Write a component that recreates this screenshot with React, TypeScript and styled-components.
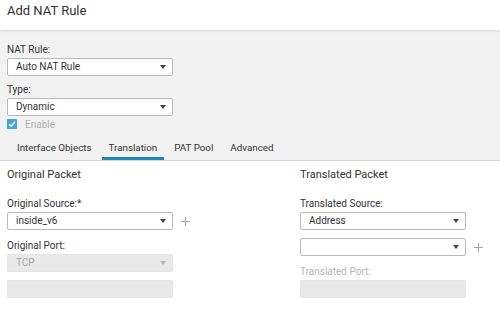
import React from "react";
import styled, { createGlobalStyle } from "styled-components";

const Global = createGlobalStyle`
  html, body { margin: 0; padding: 0; background: #fff; }
  body { font-family: Roboto, "Liberation Sans", Arial, sans-serif; color: #333; }
  * { box-sizing: border-box; }
`;

const Page = styled.div`
  width: 500px;
  height: 322px;
  overflow: hidden;
  background: #fff;
  display: flex;
  flex-direction: column;
`;

const Header = styled.div`
  height: 30px;
  padding: 2px 7px 0;
  font-size: 13px;
  line-height: 18px;
  color: #333;
  background: #fff;
  box-shadow: 0 1px 2px rgba(0, 0, 0, 0.12);
  position: relative;
  z-index: 1;
`;

const TopPanel = styled.div`
  background: #f2f2f2;
  padding: 13px 0 0 7px;
  border-bottom: 1px solid #d4d4d4;
  display: flex;
  flex-direction: column;
`;

const Label = styled.div<{ $muted?: boolean }>`
  font-size: 10px;
  line-height: 13px;
  color: ${(p) => (p.$muted ? "#b5b5b5" : "#333")};
  margin-bottom: 2px;
`;

const Field = styled.div<{ $gap?: number }>`
  display: flex;
  flex-direction: column;
  margin-bottom: ${(p) => p.$gap ?? 6}px;
`;

const SelectRow = styled.div`
  display: flex;
  align-items: center;
  gap: 8px;
`;

const SelectBox = styled.div<{ $disabled?: boolean }>`
  width: 166px;
  height: 18px;
  border: 1px solid ${(p) => (p.$disabled ? "#e4e4e4" : "#b9b9b9")};
  border-radius: 2px;
  background: ${(p) => (p.$disabled ? "#e9e9e9" : "#fff")};
  color: ${(p) => (p.$disabled ? "#a8a8a8" : "#333")};
  font-size: 10px;
  line-height: 16px;
  padding: 0 0 0 8px;
  display: flex;
  align-items: center;
  justify-content: space-between;
`;

const Arrow = styled.span<{ $disabled?: boolean }>`
  width: 0;
  height: 0;
  border-left: 3px solid transparent;
  border-right: 3px solid transparent;
  border-top: 4px solid ${(p) => (p.$disabled ? "#b5b5b5" : "#444")};
  margin-right: 6px;
`;

const Plus = styled.span`
  position: relative;
  width: 9px;
  height: 9px;
  &::before,
  &::after {
    content: "";
    position: absolute;
    background: #a5a5a5;
  }
  &::before { left: 4px; top: 0; width: 1px; height: 9px; }
  &::after { top: 4px; left: 0; height: 1px; width: 9px; }
`;

const CheckRow = styled.div`
  display: flex;
  align-items: center;
  gap: 8px;
  margin-top: -5px;
  height: 14px;
  font-size: 10px;
  color: #b0b0b0;
`;

const Check = styled.span`
  width: 10px;
  height: 10px;
  border-radius: 1px;
  background: #4ba3d3;
  display: flex;
  align-items: center;
  justify-content: center;
`;

const Tabs = styled.div`
  display: flex;
  gap: 3px;
  padding-left: 3px;
`;

const Tab = styled.div<{ $active?: boolean }>`
  padding: 10px 7px 3px;
  font-size: 9.8px;
  line-height: 13px;
  color: #333;
  border-bottom: 3px solid ${(p) => (p.$active ? "#1f87b5" : "transparent")};
`;

const Body = styled.div`
  display: grid;
  grid-template-columns: 293px 1fr;
  padding: 6px 0 0 7px;
`;

const Column = styled.div`
  display: flex;
  flex-direction: column;
`;

const SectionTitle = styled.div`
  font-size: 11px;
  line-height: 16px;
  color: #333;
  margin-bottom: 14px;
`;

const InputBox = styled.div`
  width: 166px;
  height: 18px;
  border-radius: 2px;
  background: #e9e9e9;
  border: 1px solid #e4e4e4;
`;

const Select = ({ value, disabled }: { value: string; disabled?: boolean }) => (
  <SelectBox $disabled={disabled}>
    <span>{value}</span>
    <Arrow $disabled={disabled} />
  </SelectBox>
);

export default function App() {
  return (
    <Page>
      <Global />
      <Header>Add NAT Rule</Header>
      <TopPanel>
        <Field $gap={7}>
          <Label>NAT Rule:</Label>
          <Select value="Auto NAT Rule" />
        </Field>
        <Field>
          <Label>Type:</Label>
          <Select value="Dynamic" />
        </Field>
        <CheckRow>
          <Check>
            <svg width="8" height="8" viewBox="0 0 8 8">
              <path d="M1 4.2 L3.1 6.2 L7 1.6" stroke="#fff" strokeWidth="1.4" fill="none" />
            </svg>
          </Check>
          Enable
        </CheckRow>
        <Tabs>
          <Tab>Interface Objects</Tab>
          <Tab $active>Translation</Tab>
          <Tab>PAT Pool</Tab>
          <Tab>Advanced</Tab>
        </Tabs>
      </TopPanel>
      <Body>
        <Column>
          <SectionTitle>Original Packet</SectionTitle>
          <Field $gap={9}>
            <Label>Original Source:*</Label>
            <SelectRow>
              <Select value="inside_v6" />
              <Plus />
            </SelectRow>
          </Field>
          <Field $gap={8}>
            <Label>Original Port:</Label>
            <Select value="TCP" disabled />
          </Field>
          <InputBox />
        </Column>
        <Column>
          <SectionTitle>Translated Packet</SectionTitle>
          <Field $gap={8}>
            <Label>Translated Source:</Label>
            <Select value="Address" />
          </Field>
          <Field $gap={9}>
            <SelectRow>
              <Select value="" />
              <Plus />
            </SelectRow>
          </Field>
          <Field>
            <Label $muted>Translated Port:</Label>
            <InputBox />
          </Field>
        </Column>
      </Body>
    </Page>
  );
}
